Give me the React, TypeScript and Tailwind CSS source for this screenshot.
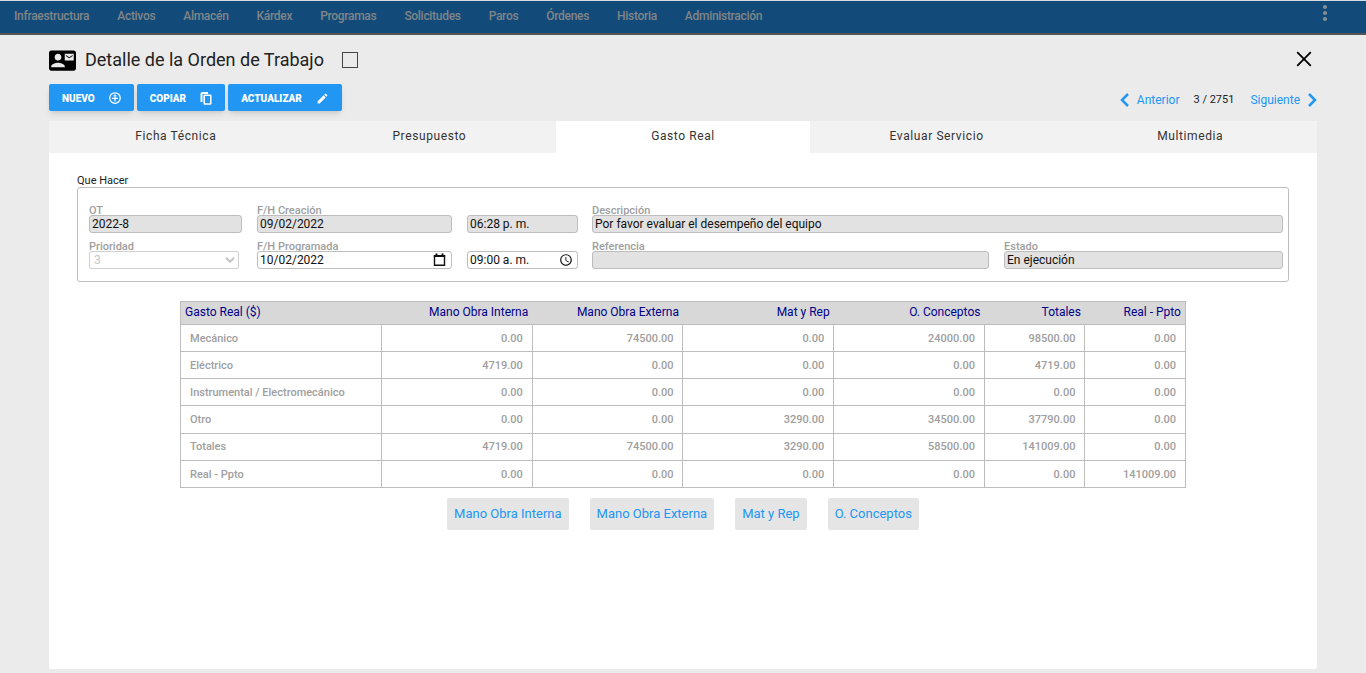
import React from "react";
import { MdAccessTime, MdContactMail, MdCreate, MdMoreVert } from "react-icons/md";

const menu = [
  "Infraestructura",
  "Activos",
  "Almacén",
  "Kárdex",
  "Programas",
  "Solicitudes",
  "Paros",
  "Órdenes",
  "Historia",
  "Administración",
];

const tabs = ["Ficha Técnica", "Presupuesto", "Gasto Real", "Evaluar Servicio", "Multimedia"];

const columns = ["Mano Obra Interna", "Mano Obra Externa", "Mat y Rep", "O. Conceptos", "Totales", "Real - Ppto"];

const rows = [
  { name: "Mecánico", values: ["0.00", "74500.00", "0.00", "24000.00", "98500.00", "0.00"] },
  { name: "Eléctrico", values: ["4719.00", "0.00", "0.00", "0.00", "4719.00", "0.00"] },
  { name: "Instrumental / Electromecánico", values: ["0.00", "0.00", "0.00", "0.00", "0.00", "0.00"] },
  { name: "Otro", values: ["0.00", "0.00", "3290.00", "34500.00", "37790.00", "0.00"] },
  { name: "Totales", values: ["4719.00", "74500.00", "3290.00", "58500.00", "141009.00", "0.00"] },
  { name: "Real - Ppto", values: ["0.00", "0.00", "0.00", "0.00", "0.00", "141009.00"] },
];

interface FieldProps {
  id: string;
  label?: string;
  ariaLabel?: string;
  value: string;
  className?: string;
  editable?: boolean;
  icon?: React.ReactNode;
}

function Field({ id, label, ariaLabel, value, className = "", editable = false, icon }: FieldProps) {
  return (
    <div className={`flex flex-col justify-end ${className}`}>
      {label && (
        <label htmlFor={id} className="h-[11px] text-[11px] leading-[13px] font-medium text-[#9e9e9e]">
          {label}
        </label>
      )}
      <div className="relative">
        <input
          id={id}
          type="text"
          aria-label={ariaLabel}
          defaultValue={value}
          readOnly={!editable}
          className={`block h-[18px] w-full rounded-[3px] border border-[#bdbdbd] px-0.5 text-xs text-[#111] ${editable ? "bg-white" : "bg-[#e2e2e2]"}`}
        />
        {icon && <span className="absolute top-0.5 right-[5px]">{icon}</span>}
      </div>
    </div>
  );
}

function ActionButton({ label, children }: { label: string; children: React.ReactNode }) {
  return (
    <button className="flex h-[27px] items-center gap-3.5 rounded-xs bg-[#2196f3] px-[13px] pt-px text-[10px] font-black text-white uppercase shadow-md">
      {label}
      {children}
    </button>
  );
}

export default function App() {
  const [tab, setTab] = React.useState("Gasto Real");

  return (
    <div className="flex min-h-screen flex-col bg-[#ebebeb] pb-1 font-[Roboto,sans-serif] text-[#212121]">
      {/* Menu principal */}
      <header className="flex h-[35px] items-center justify-between border-t border-b-2 border-t-[#d5dde2] border-b-[#555] bg-[#124b7a] pr-[29px] pl-3.5">
        <nav className="flex gap-7 pb-0.5 text-xs font-medium tracking-tight text-[#808588]">
          {menu.map((item) => (
            <a key={item} href="#">{item}</a>
          ))}
        </nav>
        <button aria-label="Más opciones" className="mb-2 text-[#8a8f93]">
          <MdMoreVert size={24} />
        </button>
      </header>

      <main className="flex grow flex-col px-[49px] pt-3">
        <div className="flex h-[26px] items-center justify-between">
          <div className="flex items-center">
            <MdContactMail size={27} color="#000" />
            <h1 className="ml-[9px] text-lg text-[#212121]">Detalle de la Orden de Trabajo</h1>
            <input
              type="checkbox"
              aria-label="Seleccionar orden"
              className="ml-[18px] h-4 w-4 appearance-none border border-[#444] checked:bg-[#2196f3]"
            />
          </div>
          <button aria-label="Cerrar" className="mr-[5px] mb-0.5 text-black">
            <svg width="16" height="16" viewBox="0 0 16 16" fill="none" stroke="currentColor" strokeWidth="1.800">
              <path d="M1.200 1.200l13.600 13.600M14.800 1.200L1.200 14.800" />
            </svg>
          </button>
        </div>

        <div className="mt-[11px] flex items-start justify-between">
          <div className="flex gap-[3px]">
            <ActionButton label="Nuevo">
              <svg width="12" height="12" viewBox="0 0 24 24" fill="none" stroke="currentColor" strokeWidth="2.5">
                <circle cx="12" cy="12" r="10.500" />
                <path d="M12 19V6M6 12.500h12" />
                <path d="M9 8.500L12 5l3 3.500" strokeWidth="1.500" />
              </svg>
            </ActionButton>
            <ActionButton label="Copiar">
              <svg width="12" height="13" viewBox="0 0 12 13" fill="none" stroke="currentColor">
                <path d="M1.500 10V2q0-1 1-1H8" strokeWidth="2" />
                <rect x="4.200" y="3.200" width="6.600" height="8.800" rx=".6" strokeWidth="1.500" />
              </svg>
            </ActionButton>
            <ActionButton label="Actualizar">
              <MdCreate size={13} />
            </ActionButton>
          </div>
          <div className="mt-1.5 flex h-[19px] items-center text-[11px]">
            <button className="flex items-center gap-2 text-xs text-[#2196f3]">
              <svg width="9" height="14" viewBox="0 0 9 14" fill="none" stroke="currentColor" strokeWidth="2.5">
                <path d="M8 1L2 7l6 6" />
              </svg>
              Anterior
            </button>
            <span className="mr-4 ml-3.5 pt-px">3 / 2751</span>
            <button className="flex items-center gap-2 text-xs text-[#2196f3]">
              Siguiente
              <svg width="9" height="14" viewBox="0 0 9 14" fill="none" stroke="currentColor" strokeWidth="2.5">
                <path d="M1 1l6 6-6 6" />
              </svg>
            </button>
          </div>
        </div>

        {/* Pestañas */}
        <div role="tablist" className="mt-2.5 grid h-8 grid-cols-5 text-xs tracking-wider text-[#333]">
          {tabs.map((name) => (
            <button
              key={name}
              role="tab"
              aria-selected={tab === name}
              onClick={() => setTab(name)}
              className={`pb-0.5 ${tab === name ? "bg-white" : "bg-[#f2f2f2]"}`}
            >
              {name}
            </button>
          ))}
        </div>

        <section className="grow rounded-b-xs bg-white px-7 pt-[21px]">
          <h2 className="text-[11px] leading-[13px]">Que Hacer</h2>
          <div className="flex h-[95px] flex-col gap-[7px] rounded-[3px] border border-[#bdbdbd] pt-4 pr-[5px] pl-[11px]">
            <div className="flex">
              <Field id="ot" label="OT" value="2022-8" className="mr-[15px] w-[153px]" />
              <Field id="fecha-creacion" label="F/H Creación" value="09/02/2022" className="mr-[15px] w-[195px]" />
              <Field id="hora-creacion" ariaLabel="Hora Creación" value="06:28 p. m." className="mr-3.5 w-[111px]" />
              <Field id="descripcion" label="Descripción" value="Por favor evaluar el desempeño del equipo" className="grow" />
            </div>
            <div className="flex">
              <div className="mr-[18px] flex w-[150px] flex-col">
                <label htmlFor="prioridad" className="h-[11px] text-[11px] leading-[13px] font-medium text-[#9e9e9e]">
                  Prioridad
                </label>
                <div className="relative">
                  <select
                    id="prioridad"
                    disabled
                    defaultValue="3"
                    className="block h-[18px] w-full appearance-none rounded-xs border border-[#d0d0d0] bg-white px-1 text-xs text-[#c8c8c8]"
                  >
                    <option value="1">1</option>
                    <option value="2">2</option>
                    <option value="3">3</option>
                  </select>
                  <svg
                    width="10"
                    height="6"
                    viewBox="0 0 10 6"
                    fill="none"
                    stroke="#c4c4c4"
                    strokeWidth="2"
                    className="pointer-events-none absolute top-1.5 right-1"
                  >
                    <path d="M1 .8l4 4 4-4" />
                  </svg>
                </div>
              </div>
              <Field
                id="fecha-programada"
                label="F/H Programada"
                value="10/02/2022"
                editable
                className="mr-[15px] w-[195px]"
                icon={
                  <svg width="14" height="14" viewBox="0 0 14 14" fill="none" stroke="#111">
                    <path d="M1.500 3h10v9.300h-10z" strokeWidth="1.400" />
                    <path d="M.8 3h11.400M3.500 .5v2M9.500 .5v2" strokeWidth="2" />
                  </svg>
                }
              />
              <Field
                id="hora-programada"
                ariaLabel="Hora Programada"
                value="09:00 a. m."
                editable
                className="mr-3.5 w-[111px]"
                icon={<MdAccessTime size={14} color="#111" />}
              />
              <Field id="referencia" label="Referencia" value="" className="mr-[15px] grow" />
              <Field id="estado" label="Estado" value="En ejecución" className="w-[279px]" />
            </div>
          </div>

          <table className="mx-auto mt-[19px] h-[187px] w-[83%] table-fixed border-collapse border border-[#bdbdbd] text-right">
            <colgroup>
              <col className="w-[20%]" />
              <col className="w-[15%]" />
              <col className="w-[15%]" />
              <col className="w-[15%]" />
              <col className="w-[15%]" />
              <col className="w-[10%]" />
              <col className="w-[10%]" />
            </colgroup>
            <thead>
              <tr className="h-[23px] bg-[#d8d8d8] text-xs text-[#00008b]">
                <th className="px-1 pb-0.5 text-left font-normal">Gasto Real ($)</th>
                {columns.map((col) => (
                  <th key={col} className="px-1 pb-0.5 font-normal">{col}</th>
                ))}
              </tr>
            </thead>
            <tbody className="text-[11px] font-medium text-[#9e9e9e]">
              {rows.map((row) => (
                <tr key={row.name} className="h-[27px]">
                  <td className="border border-[#bdbdbd] px-[9px] pt-0.5 text-left">{row.name}</td>
                  {row.values.map((value, i) => (
                    <td key={i} className="border border-[#bdbdbd] px-[9px] pt-0.5">{value}</td>
                  ))}
                </tr>
              ))}
            </tbody>
          </table>

          <div className="mt-2.5 flex justify-center gap-[21px]">
            {columns.slice(0, 4).map((name) => (
              <button key={name} className="h-8 rounded-xs bg-[#e5e5e5] px-[7px] text-[13px] text-[#2196f3]">
                {name}
              </button>
            ))}
          </div>
        </section>
      </main>
    </div>
  );
}
